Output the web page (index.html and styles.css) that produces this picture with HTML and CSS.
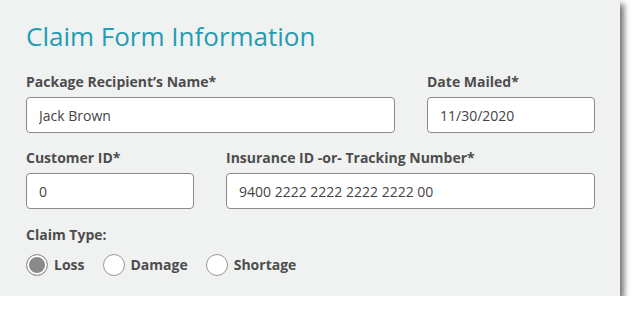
FILE: index.html
```
<!DOCTYPE html>
<html lang="en">
<head>
    <meta charset="UTF-8">
    <meta name="viewport" content="width=device-width, initial-scale=1.0">
    <title>Claim Form Information</title>
    <link rel="stylesheet" href="styles.css">
</head>
<body>
    <div class="panel">
        <h1>Claim Form Information</h1>

        <form class="claim-form">
            <div class="form-group span-2">
                <label>Package Recipient’s Name*</label>
                <input type="text" value="Jack Brown">
            </div>
            <div class="form-group">
                <label>Date Mailed*</label>
                <input type="text" value="11/30/2020">
            </div>
            <div class="form-group">
                <label>Customer ID*</label>
                <input type="text" value="0">
            </div>
            <div class="form-group span-2">
                <label>Insurance ID -or- Tracking Number*</label>
                <input type="text" value="9400 2222 2222 2222 2222 00">
            </div>
            <div class="form-group span-3 claim-type">
                <label>Claim Type:</label>
                <div class="radio-row">
                    <label class="radio"><input type="radio" name="type" checked><span>Loss</span></label>
                    <label class="radio"><input type="radio" name="type"><span>Damage</span></label>
                    <label class="radio"><input type="radio" name="type"><span>Shortage</span></label>
                </div>
            </div>
        </form>
    </div>
</body>
</html>
```

FILE: styles.css
```
* {
    margin: 0;
    padding: 0;
    box-sizing: border-box;
    font-family: "Open Sans", sans-serif;
}

body {
    background-color: #fff;
}

.panel {
    width: 620px;
    height: 296px;
    background-color: #f0f1f1;
    padding: 18px 26px 0;
    box-shadow: 4px 4px 6px rgba(0,0,0,0.55);
}

h1 {
    font-size: 26px;
    font-weight: 400;
    color: #1f9db4;
    margin-bottom: 18px;
    line-height: 36px;
}

.claim-form {
    display: grid;
    grid-template-columns: 168px 169px 168px;
    column-gap: 32px;
    row-gap: 15px;
}

.span-2 {
    grid-column: span 2;
}

.span-3 {
    grid-column: span 3;
}

.claim-type {
    margin-top: 1px;
}

label {
    display: block;
    font-size: 14px;
    font-weight: 700;
    color: #4d4d4d;
    line-height: 20px;
    margin-bottom: 5px;
}

input[type="text"] {
    width: 100%;
    height: 36px;
    padding: 0 12px;
    border: 1px solid #8a8a8a;
    border-radius: 4px;
    background-color: #fff;
    font-size: 14px;
    color: #444;
}

.radio-row {
    display: flex;
    gap: 18px;
    margin-top: 9px;
}

.radio {
    display: flex;
    align-items: center;
    gap: 6px;
    margin: 0;
}

.radio input {
    appearance: none;
    width: 22px;
    height: 22px;
    border: 1px solid #999;
    border-radius: 50%;
    background-color: #fff;
}

.radio input:checked {
    background-color: #8a8a8a;
    box-shadow: inset 0 0 0 2px #fff;
}
```
